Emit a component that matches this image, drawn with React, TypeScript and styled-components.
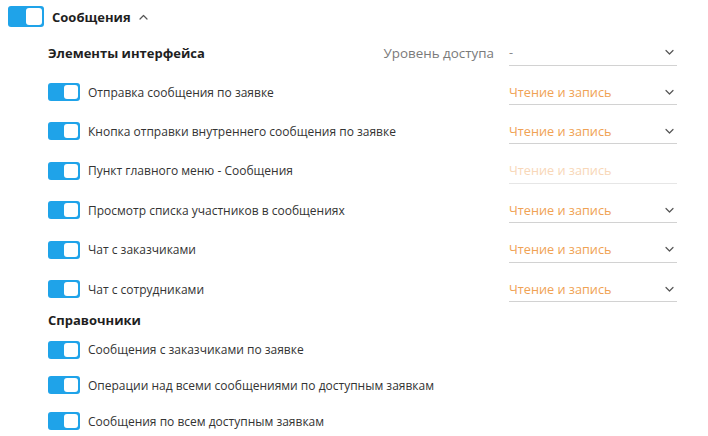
import styled, { createGlobalStyle } from 'styled-components';

const GlobalStyle = createGlobalStyle`
  body {
    margin: 0;
    background: #fff;
    font-family: 'Open Sans', 'Liberation Sans', sans-serif;
    color: #2b2b2b;
  }
`;

const Page = styled.div`
  padding: 0 8px;
  width: 692px;
`;

const TopRow = styled.div`
  display: flex;
  align-items: center;
  height: 33px;
  gap: 8px;
`;

const Title = styled.div`
  font-size: 13px;
  font-weight: 700;
  color: #1f1f1f;
`;

const Switch = styled.div<{ $big?: boolean }>`
  flex: none;
  width: ${(p) => (p.$big ? 36 : 32)}px;
  height: ${(p) => (p.$big ? 21 : 18)}px;
  border-radius: 3px;
  background: #1fa3e9;
  display: flex;
  justify-content: flex-end;
  align-items: center;
  padding: 2px;
  box-sizing: border-box;
  &::after {
    content: '';
    width: ${(p) => (p.$big ? 16 : 14)}px;
    height: ${(p) => (p.$big ? 17 : 14)}px;
    border-radius: 3px;
    background: #fff;
  }
`;

const Section = styled.div`
  margin-left: 40px;
  width: 629px;
`;

const Row = styled.div<{ $h?: number }>`
  display: flex;
  align-items: center;
  justify-content: space-between;
  height: ${(p) => p.$h ?? 39.4}px;
`;

const Left = styled.div`
  display: flex;
  align-items: center;
  gap: 8px;
`;

const GroupTitle = styled.div`
  font-size: 13px;
  font-weight: 700;
  color: #1f1f1f;
`;

const Label = styled.div`
  font-size: 12px;
  color: #333;
`;

const Right = styled.div`
  display: flex;
  align-items: center;
  gap: 15px;
`;

const LevelLabel = styled.div`
  font-size: 13.4px;
  color: #7a7a7a;
`;

const Select = styled.div<{ $disabled?: boolean }>`
  width: 168px;
  height: 26px;
  box-sizing: border-box;
  border-bottom: 1px solid ${(p) => (p.$disabled ? '#e6e6e6' : '#d2d2d2')};
  display: flex;
  align-items: center;
  justify-content: space-between;
  padding-right: 3px;
  font-size: 12.7px;
  color: ${(p) => (p.$disabled ? '#f8d7b8' : '#f0a254')};
`;

const Dash = styled.span`
  color: #8a8a8a;
`;

const Chevron = ({ up }: { up?: boolean }) => (
  <svg width="9" height="6" viewBox="0 0 9 6" fill="none">
    <path
      d={up ? 'M1 5L4.5 1.5L8 5' : 'M1 1.5L4.5 5L8 1.5'}
      stroke="#555"
      strokeWidth="1.2"
      strokeLinecap="round"
      strokeLinejoin="round"
    />
  </svg>
);

const items = [
  { label: 'Отправка сообщения по заявке' },
  { label: 'Кнопка отправки внутреннего сообщения по заявке' },
  { label: 'Пункт главного меню - Сообщения', disabled: true },
  { label: 'Просмотр списка участников в сообщениях' },
  { label: 'Чат с заказчиками' },
  { label: 'Чат с сотрудниками' },
];

const refs = [
  'Сообщения с заказчиками по заявке',
  'Операции над всеми сообщениями по доступным заявкам',
  'Сообщения по всем доступным заявкам',
];

export default function App() {
  return (
    <Page>
      <GlobalStyle />
      <TopRow>
        <Switch $big />
        <Title>Сообщения</Title>
        <Chevron up />
      </TopRow>
      <Section>
        <Row>
          <GroupTitle>Элементы интерфейса</GroupTitle>
          <Right>
            <LevelLabel>Уровень доступа</LevelLabel>
            <Select>
              <Dash>-</Dash>
              <Chevron />
            </Select>
          </Right>
        </Row>
        {items.map((it) => (
          <Row key={it.label}>
            <Left>
              <Switch />
              <Label>{it.label}</Label>
            </Left>
            <Select $disabled={it.disabled}>
              <span>Чтение и запись</span>
              {!it.disabled && <Chevron />}
            </Select>
          </Row>
        ))}
        <Row $h={23}>
          <GroupTitle>Справочники</GroupTitle>
        </Row>
        {refs.map((r) => (
          <Row $h={35.8} key={r}>
            <Left>
              <Switch />
              <Label>{r}</Label>
            </Left>
          </Row>
        ))}
      </Section>
    </Page>
  );
}
